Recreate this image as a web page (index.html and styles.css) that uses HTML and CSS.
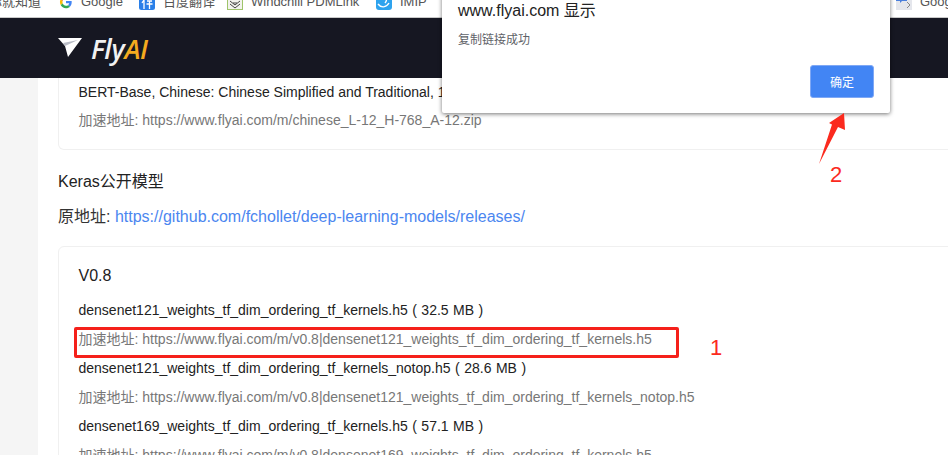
FILE: index.html
```html
<!DOCTYPE html>
<html lang="zh">
<head>
<meta charset="utf-8">
<title>FlyAI</title>
<link rel="stylesheet" href="styles.css">
</head>
<body>
<div class="bookmarks">
  <span class="bm bm-first">你就知道</span>
  <span class="bm bm-google"><svg class="ico ico-g" viewBox="0 0 16 16"><path d="M14.500 8.200c0-.5 0-1-.1-1.400H8v2.700h3.700a3.200 3.200 0 0 1-1.400 2.100l2.200 1.700c1.300-1.200 2-3 2-5.100z" fill="#4285f4"/><path d="M8 15c1.900 0 3.400-.6 4.500-1.700l-2.200-1.700c-.6.400-1.400.7-2.300.7-1.800 0-3.300-1.200-3.800-2.800l-2.300 1.800C2.900 13.500 5.300 15 8 15z" fill="#34a853"/><path d="M4.200 9.500a4.200 4.200 0 0 1 0-2.800L1.900 4.900a7 7 0 0 0 0 6.400z" fill="#fbbc05"/><path d="M8 3.800c1 0 1.900.4 2.600 1l2-2A7 7 0 0 0 1.900 4.900l2.300 1.800C4.700 5 6.200 3.800 8 3.800z" fill="#ea4335"/></svg>Google</span>
  <span class="bm bm-fanyi"><svg class="ico" viewBox="0 0 16 16"><rect x="0" y="0" width="16" height="16" rx="2.500" fill="#2a7fe8"/><path d="M5 6v9M3 9l2-3M8 7h5M7.500 10h6M10.500 7v8" stroke="#fff" stroke-width="1.300" fill="none"/></svg>百度翻译</span>
  <span class="bm bm-wind"><svg class="ico" viewBox="0 0 16 16"><rect x=".5" y=".5" width="15" height="15" fill="#f2f2ee" stroke="#9fc46a"/><path d="M3 7l5 4 5-4M3 10l5 4 5-4M6 9l4 0" stroke="#444" fill="none"/></svg>Windchill PDMLink</span>
  <span class="bm bm-imip"><svg class="ico" viewBox="0 0 16 16"><rect x="0" y="0" width="16" height="16" rx="3" fill="#2ea3ee"/><path d="M2 10c3 4 8 4 11-1M9 3c2 1 2 4 0 6" stroke="#fff" stroke-width="1.400" fill="none"/></svg>IMIP</span>
  <span class="bm bm-last"><svg class="ico" viewBox="0 0 16 16"><rect x="0" y="0" width="16" height="16" fill="#e4e6ec"/><path d="M0 0h11v7H6L4 9V7H0z" fill="#4a7fdc"/><path d="M11 8l3 3-3 3" stroke="#888" fill="none"/></svg>Google</span>
</div>

<header class="topbar">
  <svg class="logo-mark" viewBox="0 0 24 20"><path d="M0 1L24 1 10 20 7 9z" fill="#fff"/><path d="M5 6L20 3 7 9z" fill="#b9bcc6"/></svg>
  <span class="logo-text">Fly<span class="logo-ai">AI</span></span>
</header>

<div class="page">
  <main class="content">
    <section class="card card-top">
      <p class="name">BERT-Base, Chinese: Chinese Simplified and Traditional, 12-layer, 768-hidden</p>
      <p class="addr">加速地址: https://www.flyai.com/m/chinese_L-12_H-768_A-12.zip</p>
    </section>
    <h2 class="heading">Keras公开模型</h2>
    <p class="origin">原地址: <a class="link" href="#">https://github.com/fchollet/deep-learning-models/releases/</a></p>
    <section class="card card-main">
      <h3 class="version">V0.8</h3>
      <p class="name">densenet121_weights_tf_dim_ordering_tf_kernels.h5 ( 32.5 MB )</p>
      <p class="addr">加速地址: https://www.flyai.com/m/v0.8|densenet121_weights_tf_dim_ordering_tf_kernels.h5</p>
      <p class="name">densenet121_weights_tf_dim_ordering_tf_kernels_notop.h5 ( 28.6 MB )</p>
      <p class="addr">加速地址: https://www.flyai.com/m/v0.8|densenet121_weights_tf_dim_ordering_tf_kernels_notop.h5</p>
      <p class="name">densenet169_weights_tf_dim_ordering_tf_kernels.h5 ( 57.1 MB )</p>
      <p class="addr">加速地址: https://www.flyai.com/m/v0.8|densenet169_weights_tf_dim_ordering_tf_kernels.h5</p>
    </section>
  </main>
</div>

<div class="dialog">
  <div class="dialog-title">www.flyai.com 显示</div>
  <div class="dialog-msg">复制链接成功</div>
  <div class="dialog-actions"><button class="dialog-btn">确定</button></div>
</div>

<div class="mark-box"></div>
<span class="mark-num mark-one">1</span>
<span class="mark-num mark-two">2</span>
<svg class="mark-arrow" viewBox="0 0 30 54"><path d="M27 1L12 11 15 12.500 2 52 21 15 28 18z" fill="#fb2a1e"/></svg>
</body>
</html>
```
FILE: styles.css
```css
* { box-sizing: border-box; }
html, body { margin: 0; padding: 0; }
body {
  position: relative;
  width: 948px;
  height: 455px;
  overflow: hidden;
  background: #fff;
  font-family: "Liberation Sans", "Noto Sans CJK SC", sans-serif;
}
.bookmarks {
  height: 18px;
  background: #fff;
  border-bottom: 1px solid #c9c9c9;
  display: flex;
  align-items: flex-end;
  overflow: hidden;
  font-size: 13px;
  line-height: 14px;
  color: #555;
  white-space: nowrap;
}
.bm { display: flex; align-items: center; gap: 8px; height: 14px; margin-bottom: 8px; flex: none; }
.ico { width: 16px; height: 16px; flex: none; }
.ico-g { width: 14px; height: 14px; }
.bm-first { margin-left: -11px; width: 70px; }
.bm-google { width: 80px; }
.bm-fanyi { width: 88px; }
.bm-wind { width: 149px; }
.bm-imip { width: 520px; }
.topbar {
  height: 60px;
  background: #161722;
  display: flex;
  align-items: center;
  padding-left: 58px;
}
.logo-mark { width: 24px; height: 20px; margin-right: 9px; margin-top: -2px; }
.logo-text {
  font-family: "Open Sans", sans-serif;
  font-style: italic;
  font-weight: 600;
  font-size: 27px;
  color: #f1f1f1;
  letter-spacing: -0.3px;
}
.logo-ai { color: #f5ab1f; }
.page {
  height: 377px;
  background: linear-gradient(to right, #f5f5f5 38px, #fff 38px);
  padding-left: 58px;
  overflow: hidden;
}
.content { width: 920px; font-size: 14px; }
.content p, .content h2, .content h3 { margin: 0; font-weight: 400; }
.card {
  border: 1px solid #f0f0f0;
  border-radius: 6px;
  padding: 0 19.500px;
  width: 920px;
}
.card-top {
  height: 72px;
  border-top: 0;
  border-radius: 0 0 6px 6px;
  padding-top: 5px;
}
.name { height: 29px; line-height: 18px; color: #222; white-space: nowrap; }
.addr { height: 29px; line-height: 18px; color: #777; white-space: nowrap; }
.card-top .name { height: 28px; }
.card-main .name { word-spacing: 0.6px; }
.heading { font-size: 16px; line-height: 22px; color: #222; margin-top: 21px !important; }
.origin { font-size: 16px; line-height: 22px; color: #333; margin-top: 13px !important; }
.link { color: #4b86f0; text-decoration: none; }
.card-main { margin-top: 18px !important; height: 230px; padding-top: 18px; }
.version { font-size: 16px; line-height: 22px; color: #222; margin-bottom: 14px !important; }
.dialog {
  position: absolute;
  left: 442px;
  top: -10px;
  width: 448px;
  height: 123px;
  background: #fff;
  border-radius: 2px;
  box-shadow: 0 1px 4px rgba(0,0,0,.55);
  padding: 11px 0 0 16px;
}
.dialog-title { font-size: 16px; line-height: 20px; color: #222; }
.dialog-msg { font-size: 12px; line-height: 16px; color: #5f6368; margin-top: 11px; }
.dialog-actions { display: flex; justify-content: flex-end; padding-right: 16px; margin-top: 17px; }
.dialog-btn {
  width: 64px;
  height: 33px;
  border: 1px solid #7fa8f5;
  border-radius: 3px;
  background: #4285f4;
  color: #fff;
  font-family: inherit;
  font-size: 12px;
  padding: 0;
}
.mark-box {
  position: absolute;
  left: 74px;
  top: 327px;
  width: 605px;
  height: 31px;
  border: 3px solid #f5201a;
  border-radius: 2px;
}
.mark-num { position: absolute; font-size: 22px; line-height: 24px; color: #fb2a1e; }
.mark-one { left: 710px; top: 336px; }
.mark-two { left: 830px; top: 163px; }
.mark-arrow { position: absolute; left: 817px; top: 112px; width: 30px; height: 54px; }
```
